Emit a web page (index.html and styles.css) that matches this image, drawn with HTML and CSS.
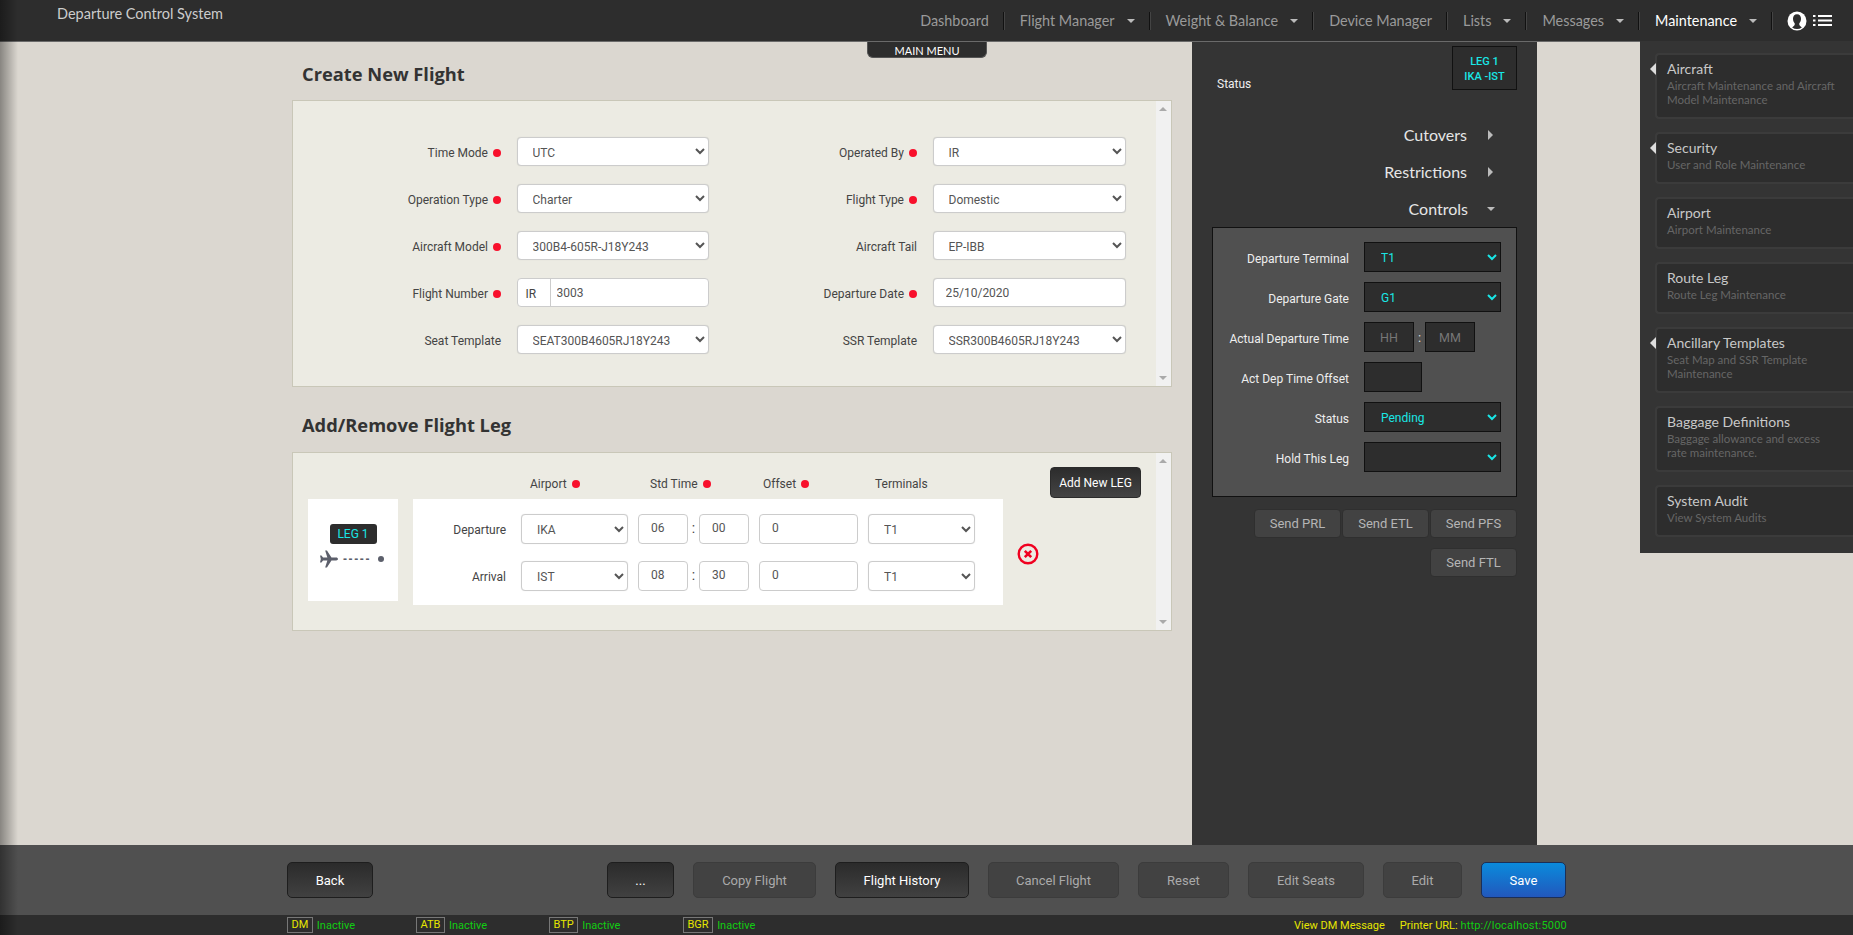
FILE: index.html
```html
<!DOCTYPE html>
<html lang="en">
<head>
<meta charset="utf-8">
<title>Departure Control System</title>
<link rel="stylesheet" href="styles.css">
</head>
<body>
<header class="topbar">
  <div class="brand">Departure Control System</div>
  <nav class="nav">
    <a class="nav-item">Dashboard</a>
    <a class="nav-item">Flight Manager<i class="caret-down"></i></a>
    <a class="nav-item">Weight &amp; Balance<i class="caret-down"></i></a>
    <a class="nav-item">Device Manager</a>
    <a class="nav-item">Lists<i class="caret-down"></i></a>
    <a class="nav-item">Messages<i class="caret-down"></i></a>
    <a class="nav-item is-active">Maintenance<i class="caret-down"></i></a>
    <div class="nav-icons">
      <svg class="icon-user" viewBox="0 0 20 20" width="20" height="20"><circle cx="10" cy="10" r="9.5" fill="#fff"/><path d="M10 3.2c2.6 0 4 2 4 4.6 0 2-.9 3.6-1.7 4.4v1.6c0 .8 1.5 1.6 2.6 2.6A9 9 0 0 1 10 18a9 9 0 0 1-4.9-1.6c1.1-1 2.6-1.8 2.6-2.6v-1.6C6.900 11.400 6 9.800 6 7.800c0-2.600 1.400-4.600 4-4.600z" fill="#2d2d2d"/></svg>
      <svg class="icon-list" viewBox="0 0 19 11" width="19" height="11"><path d="M0 0h2.500v2H0zM5 0h14v2H5zM0 4.500h2.500v2H0zM5 4.500h14v2H5zM0 9h2.500v2H0zM5 9h14v2H5z" fill="#fff"/></svg>
    </div>
  </nav>
</header>

<main class="main">
  <div class="menu-tab">MAIN MENU</div>

  <section class="form-col">
    <h2 class="title title-first">Create New Flight</h2>
    <div class="card card-flight">
      <div class="card-body">
        <div class="form-grid">
          <label class="lbl">Time Mode<i class="req"></i></label>
          <select class="ctl"><option>UTC</option></select>
          <label class="lbl">Operated By<i class="req"></i></label>
          <select class="ctl"><option>IR</option></select>

          <label class="lbl">Operation Type<i class="req"></i></label>
          <select class="ctl"><option>Charter</option></select>
          <label class="lbl">Flight Type<i class="req"></i></label>
          <select class="ctl"><option>Domestic</option></select>

          <label class="lbl">Aircraft Model<i class="req"></i></label>
          <select class="ctl"><option>300B4-605R-J18Y243</option></select>
          <label class="lbl">Aircraft Tail</label>
          <select class="ctl"><option>EP-IBB</option></select>

          <label class="lbl">Flight Number<i class="req"></i></label>
          <div class="addon-group"><span class="addon">IR</span><input class="addon-input" value="3003"></div>
          <label class="lbl">Departure Date<i class="req"></i></label>
          <input class="ctl ctl-text" value="25/10/2020">

          <label class="lbl">Seat Template</label>
          <select class="ctl"><option>SEAT300B4605RJ18Y243</option></select>
          <label class="lbl">SSR Template</label>
          <select class="ctl"><option>SSR300B4605RJ18Y243</option></select>
        </div>
      </div>
      <div class="scrollbar"><i class="sb-up"></i><i class="sb-down"></i></div>
    </div>

    <h2 class="title title-second">Add/Remove Flight Leg</h2>
    <div class="card card-leg">
      <div class="card-body leg-body">
        <div class="leg-head">
          <span class="head-lbl">Airport<i class="req"></i></span>
          <span class="head-lbl">Std Time<i class="req"></i></span>
          <span class="head-lbl">Offset<i class="req"></i></span>
          <span class="head-lbl">Terminals</span>
          <button class="add-btn">Add New LEG</button>
        </div>
        <div class="leg-main">
          <div class="leg-box">
            <span class="leg-badge">LEG 1</span>
            <div class="leg-route">
              <svg viewBox="1 1.500 22 21" width="18" height="18" class="plane"><path d="M23 12c0-1-1-1.800-2.200-1.800H15L9.500 1.500H7.300l2.700 8.700H4.700L2.800 7.700H1l1 4.300-1 4.300h1.800l1.900-2.500H10l-2.700 8.700h2.200l5.500-8.700h5.800c1.200 0 2.200-.8 2.200-1.800z" fill="#5c5f6b"/></svg>
              <span class="dashes">-----</span>
              <i class="route-dot"></i>
            </div>
          </div>
          <div class="leg-table">
            <div class="leg-row">
              <label class="leg-lbl">Departure</label>
              <select class="ctl leg-sel"><option>IKA</option></select>
              <div class="time"><input class="ctl-small" value="06"><span class="colon">:</span><input class="ctl-small" value="00"></div>
              <input class="ctl-small ctl-offset" value="0">
              <select class="ctl leg-sel"><option>T1</option></select>
            </div>
            <div class="leg-row">
              <label class="leg-lbl">Arrival</label>
              <select class="ctl leg-sel"><option>IST</option></select>
              <div class="time"><input class="ctl-small" value="08"><span class="colon">:</span><input class="ctl-small" value="30"></div>
              <input class="ctl-small ctl-offset" value="0">
              <select class="ctl leg-sel"><option>T1</option></select>
            </div>
          </div>
          <svg class="remove" viewBox="0 0 22 22" width="22" height="22"><circle cx="11" cy="11" r="9.300" fill="none" stroke="#f00020" stroke-width="2.400"/><path d="M7.800 7.800l6.400 6.400M14.200 7.800l-6.400 6.400" stroke="#f00020" stroke-width="2.600"/></svg>
        </div>
      </div>
      <div class="scrollbar"><i class="sb-up"></i><i class="sb-down"></i></div>
    </div>
  </section>

  <aside class="panel">
    <div class="panel-top">
      <span class="status">Status</span>
      <div class="leg-tag">LEG 1<br>IKA -IST</div>
    </div>
    <div class="acc"><span>Cutovers</span><i class="caret-right"></i></div>
    <div class="acc"><span>Restrictions</span><i class="caret-right"></i></div>
    <div class="acc"><span>Controls</span><i class="caret-down caret-acc"></i></div>
    <div class="controls">
      <div class="c-row"><label class="c-lbl">Departure Terminal</label><select class="dk"><option>T1</option></select></div>
      <div class="c-row"><label class="c-lbl">Departure Gate</label><select class="dk"><option>G1</option></select></div>
      <div class="c-row"><label class="c-lbl">Actual Departure Time</label><input class="dk-in" placeholder="HH"><span class="dk-colon">:</span><input class="dk-in" placeholder="MM"></div>
      <div class="c-row"><label class="c-lbl">Act Dep Time Offset</label><input class="dk-in dk-offset"></div>
      <div class="c-row"><label class="c-lbl">Status</label><select class="dk"><option>Pending</option></select></div>
      <div class="c-row"><label class="c-lbl">Hold This Leg</label><select class="dk"><option></option></select></div>
    </div>
    <div class="send">
      <button class="send-btn">Send PRL</button>
      <button class="send-btn">Send ETL</button>
      <button class="send-btn">Send PFS</button>
      <button class="send-btn">Send FTL</button>
    </div>
  </aside>

  <div class="dropdown">
    <a class="dd-item has-sub"><b class="dd-title">Aircraft</b><span class="dd-sub">Aircraft Maintenance and Aircraft Model Maintenance</span></a>
    <a class="dd-item has-sub"><b class="dd-title">Security</b><span class="dd-sub">User and Role Maintenance</span></a>
    <a class="dd-item"><b class="dd-title">Airport</b><span class="dd-sub">Airport Maintenance</span></a>
    <a class="dd-item"><b class="dd-title">Route Leg</b><span class="dd-sub">Route Leg Maintenance</span></a>
    <a class="dd-item has-sub"><b class="dd-title">Ancillary Templates</b><span class="dd-sub">Seat Map and SSR Template Maintenance</span></a>
    <a class="dd-item"><b class="dd-title">Baggage Definitions</b><span class="dd-sub">Baggage allowance and excess rate maintenance.</span></a>
    <a class="dd-item"><b class="dd-title">System Audit</b><span class="dd-sub">View System Audits</span></a>
  </div>
</main>

<div class="toolbar">
  <button class="btn btn-dark w-back">Back</button>
  <button class="btn btn-dark w-more">...</button>
  <button class="btn btn-off w-copy">Copy Flight</button>
  <button class="btn btn-dark w-hist">Flight History</button>
  <button class="btn btn-off w-cancel">Cancel Flight</button>
  <button class="btn btn-off w-reset">Reset</button>
  <button class="btn btn-off w-seats">Edit Seats</button>
  <button class="btn btn-off w-edit">Edit</button>
  <button class="btn btn-save w-save">Save</button>
</div>

<footer class="statusbar">
  <span class="st st-dm"><b class="st-tag">DM</b><span class="ok">Inactive</span></span>
  <span class="st st-atb"><b class="st-tag">ATB</b><span class="ok">Inactive</span></span>
  <span class="st st-btp"><b class="st-tag">BTP</b><span class="ok">Inactive</span></span>
  <span class="st st-bgr"><b class="st-tag">BGR</b><span class="ok">Inactive</span></span>
  <span class="st-right"><span class="yl st-view">View DM Message</span><span class="yl">Printer URL: </span><span class="ok st-url">http://localhost:5000</span></span>
</footer>
</body>
</html>
```
FILE: styles.css
```css
* { box-sizing: border-box; }
html, body { margin: 0; height: 100%; }
body {
  position: relative;
  width: 1853px;
  height: 935px;
  overflow: hidden;
  display: flex;
  flex-direction: column;
  font-family: Roboto, "Liberation Sans", sans-serif;
  font-size: 12px;
  color: #444;
  background: #dbd7d0;
}
body::before {
  content: "";
  position: absolute;
  left: 0; top: 0; bottom: 0;
  width: 18px;
  background: linear-gradient(to right, rgba(0,0,0,.38), rgba(0,0,0,0));
  z-index: 5;
  pointer-events: none;
}
i { display: inline-block; font-style: normal; }
button { font-family: inherit; cursor: default; }

/* top bar */
.topbar {
  flex: 0 0 42px;
  display: flex;
  justify-content: space-between;
  background: #2d2d2d;
  border-bottom: 1px solid #6a6a6a;
}
.brand {
  padding: 5px 0 0 57px;
  font: 14.5px/18px Lato, sans-serif;
  color: #ccc;
}
.nav { display: flex; align-items: center; padding: 0 21px 0 0; height: 41px; }
.nav-item {
  display: flex;
  align-items: center;
  height: 18px;
  padding: 0 14px 0 16px;
  border-right: 1px solid #111;
  box-shadow: 1px 0 0 #444;
  font: 14.4px/18px Lato, sans-serif;
  color: #9a9a9a;
}
.nav-item.is-active { color: #fff; }
.caret-down {
  width: 0; height: 0;
  margin-left: 12px;
  border-left: 4px solid transparent;
  border-right: 4px solid transparent;
  border-top: 4px solid #bbb;
}
.caret-right {
  width: 0; height: 0;
  border-top: 5px solid transparent;
  border-bottom: 5px solid transparent;
  border-left: 5px solid #bbb;
}
.nav-icons { display: flex; align-items: center; gap: 6px; padding-left: 15px; }
.icon-list { display: block; }
.icon-user { display: block; }

/* main */
.main {
  position: relative;
  flex: 1;
  display: flex;
  padding-left: 292px;
  min-height: 0;
}
.menu-tab {
  position: absolute;
  left: 867px; top: 0;
  width: 120px; height: 16px;
  background: #2d2d2d;
  border: 1px solid #555;
  border-top: 0;
  border-radius: 0 0 6px 6px;
  color: #fff;
  font: 11px/17px Lato, sans-serif;
  text-align: center;
}
.form-col { width: 880px; margin-right: 20px; }
.title {
  margin: 0;
  padding-left: 10px;
  font: 700 18.3px/24px "Open Sans", sans-serif;
  color: #333;
}
.title-first { padding-top: 20px; height: 58px; }
.title-second { padding-top: 26px; height: 65px; }
.card {
  display: flex;
  background: #ecebe3;
  border: 1px solid #c9c7b8;
}
.card-flight { height: 287px; }
.card-leg { height: 179px; }
.card-body { flex: 1; min-width: 0; }
.scrollbar {
  position: relative;
  flex: 0 0 15px;
  background: #f1f1f1;
}
.sb-up, .sb-down {
  position: absolute;
  left: 3px;
  width: 0; height: 0;
  border-left: 4px solid transparent;
  border-right: 4px solid transparent;
}
.sb-up { top: 6px; border-bottom: 4px solid #aaa; }
.sb-down { bottom: 6px; border-top: 4px solid #aaa; }

.form-grid {
  display: grid;
  grid-template-columns: 208px 192px 193px 193px;
  column-gap: 15.5px;
  row-gap: 18px;
  padding-top: 36px;
}
.lbl {
  display: flex;
  align-items: center;
  justify-content: flex-end;
  height: 29px;
  padding-top: 2px;
  color: #444;
}
.req {
  width: 8px; height: 8px;
  margin-left: 5px;
  border-radius: 50%;
  background: #f8102c;
}
.ctl {
  width: 100%;
  height: 29px;
  padding: 2px 0 0 11px;
  border: 1px solid #ccc;
  border-radius: 4px;
  background-color: #fff;
  font: 12px Roboto, sans-serif;
  color: #555;
  box-shadow: 0 0 1px rgba(0,0,0,.15);
}
.ctl-text { padding: 1px 0 0 12px; }
.addon-group {
  display: flex;
  height: 29px;
  border: 1px solid #ccc;
  border-radius: 4px;
  background: #fff;
  overflow: hidden;
}
.addon {
  flex: 0 0 33px;
  padding: 1px 0 0 8px;
  line-height: 28px;
  border-right: 1px solid #ccc;
  color: #444;
}
.addon-input {
  flex: 1;
  min-width: 0;
  border: 0;
  padding: 1px 0 0 6px;
  font: 12px Roboto, sans-serif;
  color: #555;
  background: transparent;
}

/* legs */
.leg-body { padding: 0 0 0 15px; }
.leg-head {
  display: grid;
  grid-template-columns: 120px 113px 112px 175px 91px;
  height: 46px;
  padding-left: 222px;
  align-items: start;
}
.head-lbl {
  display: flex;
  align-items: center;
  margin-top: 23px;
  line-height: 16px;
}
.add-btn {
  width: 91px;
  height: 31px;
  margin-top: 14px;
  padding: 0;
  border: 1px solid #2b2b2b;
  border-radius: 4px;
  background: linear-gradient(#2c2c2c, #444);
  color: #fff;
  font-size: 12px;
}
.leg-main { display: flex; align-items: flex-start; }
.leg-box {
  width: 90px;
  height: 102px;
  margin-right: 15px;
  background: #fff;
  display: flex;
  flex-direction: column;
  align-items: center;
  padding-top: 25px;
}
.leg-badge {
  width: 47px;
  height: 20px;
  border-radius: 3px;
  background: #2d2d2d;
  color: #19e6e6;
  font-size: 12px;
  line-height: 20px;
  text-align: center;
}
.leg-route { display: flex; align-items: center; align-self: flex-start; height: 20px; margin-top: 5px; padding-left: 12px; }
.plane { display: block; }
.dashes { margin: 0 7px 0 5px; color: #5c5f6b; font: 700 12px/14px "Liberation Sans", sans-serif; letter-spacing: 1.6px; }
.route-dot { width: 6px; height: 6px; border-radius: 50%; background: #5c5f6b; }
.leg-table {
  width: 590px;
  height: 106px;
  background: #fff;
  padding-top: 15px;
  display: flex;
  flex-direction: column;
  gap: 14px;
}
.leg-row { display: flex; gap: 10px; }
.leg-lbl {
  width: 98px;
  padding-right: 5px;
  line-height: 33px;
  text-align: right;
  color: #444;
}
.leg-sel { width: 107px; height: 30px; padding-left: 11px; }
.time { display: flex; width: 111px; }
.colon { flex: 0 0 11px; text-align: center; font-size: 14px; line-height: 28px; color: #444; }
.ctl-small {
  width: 50px;
  height: 30px;
  padding: 0 0 2px 12px;
  border: 1px solid #ccc;
  border-radius: 4px;
  font: 12px Roboto, sans-serif;
  color: #555;
  background: #fff;
}
.ctl-offset { width: 99px; }
.remove { display: block; margin: 44px 0 0 14px; }

/* side panel */
.panel {
  width: 345px;
  background: #343434;
  padding: 4px 20px 0 20px;
  color: #fff;
}
.panel-top {
  display: flex;
  justify-content: space-between;
  align-items: flex-end;
  height: 44px;
  padding-left: 5px;
}
.status { line-height: 12px; font-size: 12px; color: #eee; }
.leg-tag {
  width: 65px;
  height: 44px;
  padding-top: 7px;
  background: #2d2d2d;
  border: 1px solid #111;
  color: #19e6e6;
  font-size: 11px;
  font-weight: 500;
  line-height: 15px;
  text-align: center;
}
.acc {
  display: flex;
  justify-content: flex-end;
  align-items: center;
  height: 37px;
  padding-right: 24px;
  font: 16px/37px Lato, sans-serif;
  color: #e6e6e6;
}
.panel-top + .acc { margin-top: 26px; }
.acc span { margin-right: 21px; }
.caret-acc { margin-left: -2px; margin-right: -2px; }
.controls {
  height: 270px;
  padding: 14px 0 0 0;
  background: #505050;
  border: 1px solid #111;
  display: flex;
  flex-direction: column;
  gap: 10px;
}
.c-row { display: flex; align-items: center; height: 30px; }
.c-lbl {
  width: 136px;
  margin-right: 15px;
  padding-top: 3px;
  text-align: right;
  color: #eee;
  font-size: 12px;
}
.dk {
  width: 137px;
  height: 30px;
  padding: 2px 0 0 12px;
  border: 1px solid #111;
  background-color: #2d2d2d;
  color: #19e6e6;
  font: 12px Roboto, sans-serif;
  border-radius: 0;
}
.dk-in {
  width: 50px;
  height: 30px;
  padding: 0;
  border: 1px solid #111;
  background: #2d2d2d;
  color: #ccc;
  text-align: center;
  font: 12.5px Roboto, sans-serif;
  border-radius: 0;
}
.dk-in::placeholder { color: #777; opacity: 1; }
.dk-colon { width: 11px; text-align: center; font-size: 13px; color: #ddd; }
.dk-offset { width: 58px; }
.send {
  display: flex;
  flex-wrap: wrap;
  justify-content: flex-end;
  gap: 10px 1px;
  margin-top: 12px;
}
.send-btn {
  width: 87px;
  height: 29px;
  padding: 0;
  border: 1px solid #2f2f2f;
  border-radius: 4px;
  background: #424242;
  color: #b5b5b5;
  font-size: 13px;
}

/* dropdown */
.dropdown {
  position: absolute;
  top: -1px; right: 0;
  width: 213px;
  height: 512px;
  padding: 12px 0 0 15px;
  background: #343434;
  z-index: 3;
}
.dd-item {
  position: relative;
  display: block;
  margin-bottom: 13px;
  padding: 4px 17px 10px 10px;
  border: 2px solid #3b3b3b;
  border-right: 0;
  border-radius: 4px 0 0 4px;
  background: #2d2d2d;
}
.dd-item.has-sub::before {
  content: "";
  position: absolute;
  left: -7px; top: 8px;
  border-top: 6px solid transparent;
  border-bottom: 6px solid transparent;
  border-right: 6px solid #ddd;
}
.dd-title { display: block; font: 400 14px/20px Lato, sans-serif; color: #c8c8c8; }
.dd-sub { display: block; font: 11.5px/14px Lato, sans-serif; color: #666; }

/* bottom toolbar */
.toolbar {
  flex: 0 0 70px;
  display: flex;
  align-items: center;
  gap: 19px;
  padding-left: 287px;
  background: #505050;
}
.btn {
  height: 36px;
  padding: 0;
  border-radius: 5px;
  font-size: 13px;
}
.btn-dark { border: 1px solid #1e1e1e; background: linear-gradient(#2b2b2b, #414141); color: #fff; }
.btn-off { border: 1px solid #3c3c3c; background: #424242; color: #aaa; }
.btn-save { border: 1px solid #1b2f57; background: linear-gradient(#0a8bdc, #2258bc); color: #fff; }
.w-back { width: 86px; margin-right: 215px; }
.w-more { width: 67px; }
.w-copy { width: 123px; }
.w-hist { width: 134px; }
.w-cancel { width: 131px; }
.w-reset { width: 91px; }
.w-seats { width: 116px; }
.w-edit { width: 79px; }
.w-save { width: 85px; }

/* status bar */
.statusbar {
  flex: 0 0 20px;
  display: flex;
  align-items: center;
  padding-left: 287px;
  background: #2d2d2d;
  font-size: 11px;
}
.st { display: flex; align-items: center; }
.st-dm { width: 129px; }
.st-atb { width: 133px; }
.st-btp { width: 134px; }
.st-bgr { width: 611px; }
.st-tag {
  height: 16px;
  padding: 0 3.500px;
  margin-right: 4px;
  border: 1px solid #777;
  color: #e6e600;
  font-weight: 400;
  line-height: 14px;
}
.ok { color: #12cc12; }
.yl { color: #e6e600; }
.st-right { white-space: pre; }
.st-view { margin-right: 15px; }
.st-url { letter-spacing: .2px; }
```
